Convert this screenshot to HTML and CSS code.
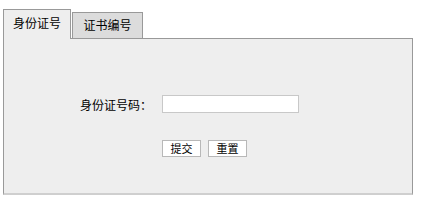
FILE: index.html
```html
<!DOCTYPE html>
<html lang="zh-CN">
<head>
    <meta charset="UTF-8">
    <title>查询</title>
    <link rel="stylesheet" href="styles.css">
</head>
<body>
    <div class="wrap">
        <div class="tabs">
            <div class="tab active">身份证号</div>
            <div class="tab">证书编号</div>
        </div>
        <div class="panel">
            <div class="form">
                <label class="label" for="idno">身份证号码：</label>
                <input class="input" id="idno" type="text">
                <div></div>
                <div class="buttons">
                    <button class="btn">提交</button>
                    <button class="btn">重置</button>
                </div>
            </div>
        </div>
    </div>
</body>
</html>
```

FILE: styles.css
```css
body {
    margin: 0;
    font-family: "Noto Sans CJK SC", "Liberation Sans", sans-serif;
    font-size: 12px;
    color: #000;
    background-color: #fff;
}
.wrap {
    padding: 9px 0 0 3px;
    width: 410px;
}
.tabs {
    display: flex;
    align-items: flex-end;
    height: 29px;
}
.tab {
    box-sizing: border-box;
    height: 26px;
    width: 71px;
    line-height: 24px;
    text-align: center;
    font-size: 12px;
    background-color: #dcdcdc;
    border: 1px solid #999;
    border-bottom: none;
    margin-left: 1px;
}
.tab.active {
    height: 30px;
    width: 68px;
    line-height: 26px;
    margin-left: 0;
    margin-bottom: -1px;
    background-color: #eeeeee;
    position: relative;
}
.panel {
    box-sizing: border-box;
    height: 157px;
    background-color: #eeeeee;
    border: 1px solid #999;
    border-bottom: 2px solid #cfcfcf;
}
.form {
    display: grid;
    grid-template-columns: 72px 137px;
    column-gap: 10px;
    row-gap: 27px;
    padding: 56px 0 0 76px;
    align-items: center;
}
.label {
    text-align: right;
}
.input {
    box-sizing: border-box;
    height: 18px;
    width: 137px;
    margin: 0;
    padding: 0 2px;
    border: 1px solid #c8c8c8;
    background-color: #fff;
}
.buttons {
    display: flex;
    gap: 7px;
}
.btn {
    box-sizing: border-box;
    width: 39px;
    height: 17px;
    margin: 0;
    padding: 0;
    font-family: "Noto Sans CJK SC", sans-serif;
    font-size: 11px;
    line-height: 15px;
    background-color: #fff;
    border: 1px solid #b8b8b8;
}
```
